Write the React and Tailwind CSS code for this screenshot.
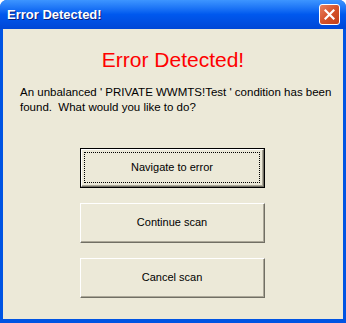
const face = 'bg-[#ece9d8]'
const font = { fontFamily: '"Liberation Sans", Arial, sans-serif' }

function ClassicButton({ label, focused }) {
  if (focused) {
    return (
      <button className="block h-[40px] w-[185px] border border-black bg-[#ece9d8]">
        <div className="h-full w-full border-t border-l border-white border-r border-b border-r-[#716f64] border-b-[#716f64]">
          <div className="flex h-full w-full items-center justify-center border-b border-r border-[#aca899] p-[2px]">
            <div className="flex h-full w-full items-center justify-center border border-dotted border-black text-[11px] text-black">
              {label}
            </div>
          </div>
        </div>
      </button>
    )
  }
  return (
    <button className="block h-[40px] w-[185px] border-t border-l border-white border-r border-b border-r-[#716f64] border-b-[#716f64] bg-[#ece9d8]">
      <div className="flex h-full w-full items-center justify-center border-r border-b border-[#aca899] text-[11px] text-black">
        {label}
      </div>
    </button>
  )
}

export default function App() {
  return (
    <div className="h-[323px] w-[346px] bg-white" style={font}>
      <div className="flex h-full w-full flex-col rounded-t-[7px] bg-[#0054e3]">
        <div className="flex h-[29px] shrink-0 items-center justify-between rounded-t-[7px] bg-gradient-to-b from-[#3d95ff] via-[#0058ee] to-[#0047d6] pl-[7px] pr-[6px]">
          <span
            className="text-[13px] font-bold text-white"
            style={{ textShadow: '1px 1px 0 #0a1e7a' }}
          >
            Error Detected!
          </span>
          <div className="flex h-[21px] w-[21px] items-center justify-center rounded-[3px] border border-white bg-gradient-to-br from-[#e9805e] via-[#d5522a] to-[#c23f1a]">
            <svg width="11" height="11" viewBox="0 0 11 11">
              <path d="M1.5 1.5 L9.5 9.5 M9.5 1.5 L1.5 9.5" stroke="white" strokeWidth="2.2" strokeLinecap="square" />
            </svg>
          </div>
        </div>
        <div className={`mx-[3px] mb-[4px] flex flex-1 flex-col ${face}`}>
          <div className="pt-[18px] text-center text-[21px] leading-[26px] text-[#ff0000]">Error Detected!</div>
          <p className="mt-[12px] pl-[17px] pr-[10px] text-[11.5px] leading-[15px] text-black">
            An unbalanced ' PRIVATE WWMTS!Test ' condition has been found.&nbsp; What would you like to do?
          </p>
          <div className="mt-[33px] flex flex-col gap-[15px] pl-[77px]">
            <ClassicButton label="Navigate to error" focused />
            <ClassicButton label="Continue scan" />
            <ClassicButton label="Cancel scan" />
          </div>
        </div>
      </div>
    </div>
  )
}
